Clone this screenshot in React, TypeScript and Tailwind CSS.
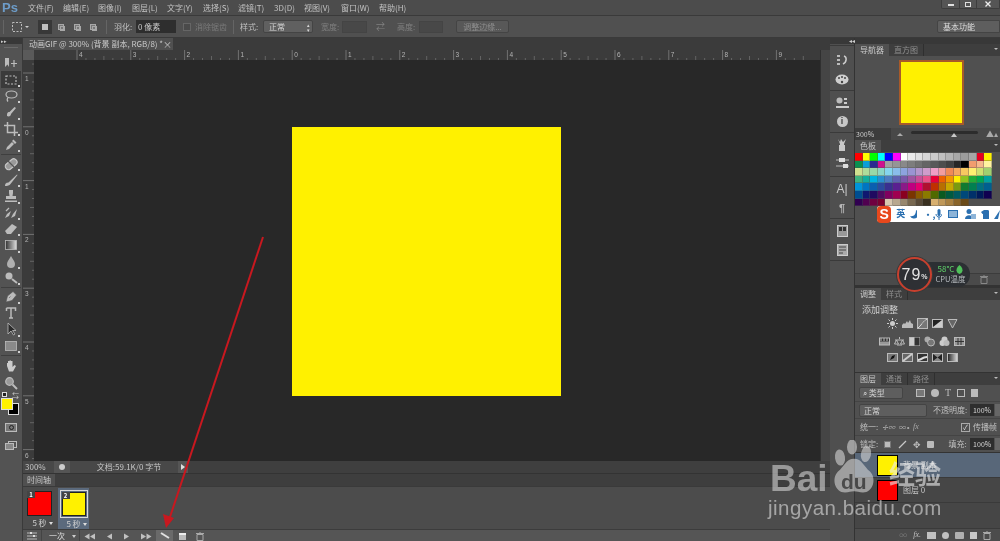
import React from "react";

const FONT = "font-['Noto_Sans_CJK_SC','Liberation_Sans',sans-serif]";

const I = ({ s = 14, children, className = "" }: { s?: number; children: React.ReactNode; className?: string }) => (
  <svg width={s} height={s} viewBox="0 0 14 14" fill="none" stroke="#bcbcbc" strokeWidth="1.2" className={"shrink-0 " + className}>
    {children}
  </svg>
);

const toolIcons: (React.ReactNode | null)[] = [
  <><path d="M2 2v9l2.5-2.5L6 11V2z" fill="#bcbcbc" stroke="none" transform="translate(-1 0)" /><path d="M10 4v7M7 7.5h6" /></>,
  <rect x="2" y="3" width="10" height="8" strokeDasharray="2 1.5" />,
  <><ellipse cx="7.5" cy="5.5" rx="5.5" ry="3.5" /><path d="M4 8.5c-1 1.5-1 3 0 4" /></>,
  <><path d="M3 11c2 1 4 0 4-2l5-6-1.5-1-5 5C3 7 3 9 3 11z" fill="#bcbcbc" stroke="none" /></>,
  <><path d="M3.5 0v10.5H14M0 3.5h10.5V14" strokeWidth="1.5" /></>,
  <><path d="M2 12l1-3 5-5 2 2-5 5zM8 3l1.5-1.5 3 3L11 6z" fill="#bcbcbc" stroke="none" /></>,
  <><rect x="0.5" y="4" width="13" height="6.5" rx="3" transform="rotate(-40 7 7)" fill="#9a9a9a" stroke="#c8c8c8" /><path d="M4 4l6 6" stroke="#555" /></>,
  <path d="M1 13c0-3 2-3.5 3.5-3.5L13 1.5 13.5 2l-7 9c-1 1.5-3 2-5.500 2z" fill="#bcbcbc" stroke="none" />,
  <><path d="M5 1h4v3L8.500 7H12v3H2V7h3.500L5 4zM1 11.500h12V13H1z" fill="#bcbcbc" stroke="none" /></>,
  <><path d="M1 12l2-4 4-3-2 5zM7 12l2-4 4-5-2 7z" fill="#bcbcbc" stroke="none" /><path d="M2 5l3-3" /></>,
  <path d="M1 9l7-7 5 3-6 7H3z" fill="#bcbcbc" stroke="none" />,
  <><defs><linearGradient id="gr"><stop offset="0" stopColor="#333" /><stop offset="1" stopColor="#ddd" /></linearGradient></defs><rect x="1.500" y="2.500" width="11" height="9" fill="url(#gr)" stroke="#bcbcbc" strokeWidth=".8" /></>,
  <path d="M7 1c2 3.500 4 5.500 4 8a4 4 0 0 1-8 0c0-2.500 2-4.500 4-8z" fill="#b0b0b0" stroke="none" />,
  <><circle cx="5" cy="5" r="3.500" fill="#bcbcbc" stroke="none" /><path d="M8 8l5 4" strokeWidth="2" /></>,
  <path d="M2 12l1.500-6L9 1.500l3.500 3.500L8 10.500zM5 8l1.500-1.500" fill="#bcbcbc" stroke="#555" strokeWidth=".6" />,
  <path d="M2.500 2h9v3M7 2v10M5 12h4M2.500 5V2" strokeWidth="1.500" />,
  <path d="M4 1v11l3-3 2.500 4 1.500-1-2.500-3.500H12z" fill="#2c2c2c" stroke="#bcbcbc" strokeWidth=".8" />,
  <rect x="1.500" y="2.500" width="11" height="9" fill="#8a8a8a" stroke="#bcbcbc" strokeWidth=".8" />,
  <path d="M3 7V4h1v3-5h1.500v5V1.500H7V7V2h1.500v6L10.500 6l1.500 1-3 5.500H5z" fill="#cccccc" stroke="none" />,
  <><circle cx="5.500" cy="5.500" r="3.800" fill="#9a9a9a" /><path d="M8.500 8.500l4.500 4.500" strokeWidth="2" /></>,
];

const Corner = () => <span className="absolute right-[1px] bottom-[1px] w-[2px] h-[2px] bg-[#cfcfcf]" />;

const Tool = ({ i, active = false }: { i: number; active?: boolean }) => (
  <div className={"relative w-[20px] h-[16.4px] flex items-center justify-center " + (active ? "bg-[#3a3a3a]" : "")}>
    <I>{toolIcons[i]}</I>
    {i !== 0 && i !== 15 && i !== 18 && i !== 19 ? <Corner /> : null}
  </div>
);

const Sep = () => <div className="w-[20px] h-[1px] bg-[#3f3f3f] my-[0.5px]" />;

const HRuler = () => {
  const ticks: React.ReactNode[] = [];
  const labels = ["4", "3", "2", "1", "0", "1", "2", "3", "4", "5", "6", "7", "8", "9"];
  const x0 = 43;
  for (let n = 0; n < 15; n++) {
    const x = x0 + 53.8 * n;
    ticks.push(<line key={"m" + n} x1={x} x2={x} y1={0} y2={10} stroke="#8a8a8a" strokeWidth=".7" />);
    for (let k = 1; k < 6; k++) {
      const xx = x + (53.8 / 6) * k;
      ticks.push(<line key={"t" + n + k} x1={xx} x2={xx} y1={k === 3 ? 6 : 8} y2={10} stroke="#808080" strokeWidth=".6" />);
    }
    if (labels[n]) ticks.push(<text key={"l" + n} x={x + 2} y={7} fontSize="6.500" fill="#b5b5b5" fontFamily="Liberation Sans">{labels[n]}</text>);
  }
  return (
    <svg width="774" height="10" className="block">
      {ticks}
    </svg>
  );
};

const VRuler = () => {
  const ticks: React.ReactNode[] = [];
  const labels = ["1", "0", "1", "2", "3", "4", "5", "6"];
  const y0 = 13;
  for (let n = -1; n < 8; n++) {
    const y = y0 + 53.8 * n;
    ticks.push(<line key={"m" + n} y1={y} y2={y} x1={0} x2={11} stroke="#8a8a8a" strokeWidth=".7" />);
    for (let k = 1; k < 6; k++) {
      const yy = y + (53.8 / 6) * k;
      ticks.push(<line key={"t" + n + k} y1={yy} y2={yy} x1={k === 3 ? 7 : 9} x2={11} stroke="#808080" strokeWidth=".6" />);
    }
    if (n >= 0 && labels[n]) ticks.push(<text key={"l" + n} x={2} y={y + 8} fontSize="6.500" fill="#b5b5b5" fontFamily="Liberation Sans">{labels[n]}</text>);
  }
  return (
    <svg width="11" height="401" className="block shrink-0 bg-[#3b3b3b]">
      {ticks}
    </svg>
  );
};

const menu = ["文件(F)", "编辑(E)", "图像(I)", "图层(L)", "文字(Y)", "选择(S)", "滤镜(T)", "3D(D)", "视图(V)", "窗口(W)", "帮助(H)"];
const menuW = [35, 35, 34, 35, 36, 35, 36, 30, 37, 38, 30];

const Tab = ({ t, on = false }: { t: string; on?: boolean }) => (
  <div className={"h-full px-[5px] flex items-center text-[8px] " + (on ? "bg-[#505050] text-[#c8c8c8]" : "text-[#8f8f8f] border-r border-[#2f2f2f]")}>{t}</div>
);

const PanelHead = ({ tabs }: { tabs: string[] }) => (
  <div className="h-[12px] shrink-0 bg-[#3e3e3e] flex items-stretch relative">
    {tabs.map((t, i) => (
      <Tab key={t} t={t} on={i === 0} />
    ))}
    <span className="absolute right-[2px] top-[4px] w-0 h-0 border-x-[2px] border-x-transparent border-t-[2px] border-t-[#bbbbbb]" />
  </div>
);

const swatches: string[][] = [
  ["#ff0000", "#ffff00", "#00ff00", "#00ffff", "#0000ff", "#ff00ff", "#ffffff", "#ebebeb", "#e1e1e1", "#d7d7d7", "#cbcbcb", "#c0c0c0", "#b4b4b4", "#a8a8a8", "#9c9c9c", "#a6a6a6", "#e60020", "#fff100"],
  ["#0a9050", "#0a9fd8", "#2a2a90", "#d01090", "#a0a0a0", "#959595", "#898989", "#7d7d7d", "#717171", "#656565", "#595959", "#4d4d4d", "#404040", "#262626", "#000000", "#f19d6f", "#f6b98c", "#fff3a0"],
  ["#cfe08f", "#aedc9a", "#98d8a8", "#8cd7c6", "#85d5ee", "#89bdea", "#8da4de", "#9a93d2", "#b696cc", "#cf9ccb", "#ef9fc7", "#f29da0", "#f08a58", "#f5a860", "#f8c860", "#fff070", "#cfe070", "#a0d070"],
  ["#3fb37f", "#14ae9c", "#00b4e0", "#2a8fd0", "#4f7cc0", "#5f62b0", "#7a58a8", "#9f54a0", "#c84f98", "#e9528a", "#e6003a", "#ec6100", "#f39800", "#fff100", "#8fc31f", "#22ac38", "#00a752", "#00a0a0"],
  ["#0095d9", "#0075c2", "#0a5fb0", "#2a4aa0", "#3a2f90", "#5a2090", "#8a1a88", "#c00080", "#e4006f", "#b01030", "#c03000", "#b87000", "#c8a800", "#7a9a10", "#107a30", "#008050", "#007080", "#005f90"],
  ["#004d90", "#101870", "#200a60", "#500a60", "#80005f", "#a00050", "#8a0020", "#7a3500", "#8a5a00", "#8a7a00", "#506a00", "#0a5a20", "#005a40", "#005a60", "#00487a", "#00306a", "#001a5a", "#100050"],
  ["#300050", "#500050", "#700040", "#7a0030", "#d8c8b0", "#b8a890", "#98886f", "#786850", "#584a38", "#3a3020", "#d8b070", "#c09858", "#a88040", "#8a6428", "#6a4a18"],
];

const Adj = ({ k }: { k: number }) => (
  <svg width="11" height="11" viewBox="0 0 11 11" className="shrink-0">
    {k === 0 ? (
      <><circle cx="5.500" cy="5.500" r="2.500" fill="#ccc" /><path d="M5.500 0v2M5.500 9v2M0 5.500h2M9 5.500h2M1.500 1.500l1.500 1.500M8 8l1.500 1.500M1.500 9.500L3 8M8 3l1.500-1.500" stroke="#ccc" /></>
    ) : k === 1 ? (
      <path d="M0 10V7l2-2 1 1 2-3 1 2 2-3 1 3 2 1v4z" fill="#bbb" />
    ) : k === 2 ? (
      <><rect x=".5" y=".5" width="10" height="10" fill="#777" stroke="#bbb" /><path d="M1 10C4 8 6 3 10 1" stroke="#ddd" /></>
    ) : k === 3 ? (
      <><rect x=".5" y="1.500" width="10" height="8" fill="#222" stroke="#bbb" /><path d="M1 9L10 2v7z" fill="#ccc" /></>
    ) : k === 4 ? (
      <path d="M1 1.500h9L5.500 10z" fill="#666" stroke="#bbb" />
    ) : k === 5 ? (
      <><rect x=".5" y="2" width="10" height="7" fill="#999" stroke="#bbb" /><path d="M1 2.500h9v3H1z" fill="#333" /><path d="M2 2v3M5 2v3M8 2v3" stroke="#bbb" /></>
    ) : k === 6 ? (
      <path d="M5.500 1v2M1 4h9M2.500 4L.5 8h4zM8.500 4l-2 4h4zM3 9h5" stroke="#bbb" fill="none" />
    ) : k === 7 ? (
      <><rect x=".5" y="1.500" width="10" height="8" fill="#ccc" stroke="#bbb" /><rect x="5.500" y="1.500" width="5" height="8" fill="#333" /></>
    ) : k === 8 ? (
      <><circle cx="3.500" cy="3.500" r="3" fill="#aaa" /><circle cx="7" cy="6.500" r="3.500" fill="#777" stroke="#bbb" /></>
    ) : k === 9 ? (
      <><circle cx="5.500" cy="3.500" r="3" fill="#ccc" /><circle cx="3.500" cy="7" r="3" fill="#ccc" /><circle cx="7.500" cy="7" r="3" fill="#bbb" /></>
    ) : k === 10 ? (
      <><rect x=".5" y="1.500" width="10" height="8" fill="#999" stroke="#bbb" /><path d="M4 2v7M7 2v7M1 5.500h9" stroke="#333" /></>
    ) : k === 11 ? (
      <><rect x=".5" y="1.500" width="10" height="8" fill="#777" stroke="#bbb" /><path d="M3 8l2-4 3-1-1 3z" fill="#111" /></>
    ) : k === 12 ? (
      <><rect x=".5" y="1.500" width="10" height="8" fill="#666" stroke="#bbb" /><path d="M1 9l9-7" stroke="#ccc" strokeWidth="2" /></>
    ) : k === 13 ? (
      <><rect x=".5" y="1.500" width="10" height="8" fill="#333" stroke="#bbb" /><path d="M1 7c3 0 4-3 9-3v2c-4 0-5 3-9 3z" fill="#ddd" /></>
    ) : k === 14 ? (
      <><rect x=".5" y="1.500" width="10" height="8" fill="#888" stroke="#bbb" /><path d="M1 2l4.500 3.500L1 9zM10 2L5.500 5.500 10 9z" fill="#222" /></>
    ) : (
      <><defs><linearGradient id="ad"><stop offset="0" stopColor="#222" /><stop offset="1" stopColor="#ddd" /></linearGradient></defs><rect x=".5" y="1.500" width="10" height="8" fill="url(#ad)" stroke="#bbb" /></>
    )}
  </svg>
);

const DockSep = () => <div className="w-[24px] h-[2px] border-b border-[#3a3a3a] mb-[2px]" />;
const DockBtn = ({ children }: { children: React.ReactNode }) => (
  <div className="w-[24px] h-[19px] flex items-center justify-center">{children}</div>
);

const Arrow = ({ flip = false, double = false }: { flip?: boolean; double?: boolean }) => (
  <svg width={double ? 11 : 7} height="7" viewBox={double ? "0 0 11 7" : "0 0 7 7"} className={flip ? "-scale-x-100" : ""}>
    <path d="M0 .5l5 3-5 3z" fill="#c0c0c0" />
    {double ? <path d="M5.500 .5l5 3-5 3z" fill="#c0c0c0" /> : null}
  </svg>
);

const Frame = ({ n, color, sel = false }: { n: number; color: string; sel?: boolean }) => (
  <div className={"flex flex-col items-center w-[31px] h-[41px] " + (sel ? "bg-[#5b6a7d]" : "")}>
    <div className={"relative mt-[2px] " + (sel ? "w-[28px] h-[28px] border border-[#dcdcdc] p-[1px]" : "w-[27px] h-[27px] p-[1px]")}>
      <div className="w-full h-full border border-[#222]" style={{ background: color }} />
      <span className="absolute left-[1px] top-[1px] w-[8px] h-[7px] bg-[#444] text-white text-[6px] leading-[7px] text-center font-bold">{n}</span>
    </div>
    <div className="flex items-center gap-[2px] text-[8px] leading-[10px] text-[#d0d0d0] mt-[1px] ml-[6px]">
      5 秒<span className="w-0 h-0 border-x-[2px] border-x-transparent border-t-[3px] border-t-[#ddd]" />
    </div>
  </div>
);

export default function App() {
  return (
    <div className={"relative w-[1000px] h-[541px] overflow-hidden bg-[#505050] flex flex-col text-[#c0c0c0] blur-[0.3px] " + FONT}>
      {/* menu bar */}
      <div className="h-[16px] shrink-0 flex items-center bg-[#4c4c4c] border-b border-[#3a3a3a]">
        <div className="w-[28px] pl-[2px] text-[13px] leading-[14px] font-bold text-[#6d9cc8] font-['Liberation_Sans',sans-serif]">Ps</div>
        {menu.map((m, i) => (
          <div key={m} className="text-[8px] leading-[14px] text-[#c2c2c2] whitespace-nowrap" style={{ width: menuW[i] }}>
            {m}
          </div>
        ))}
        <div className="ml-auto self-start h-[9px] w-[59px] flex bg-[#555555] border border-t-0 border-[#3d3d3d] rounded-b-[2px]">
          <div className="w-[18px] flex items-center justify-center border-r border-[#3d3d3d]"><span className="w-[6px] h-[1.500px] bg-[#e0e0e0] mt-[2px]" /></div>
          <div className="w-[17px] flex items-center justify-center border-r border-[#3d3d3d]"><span className="w-[6px] h-[5px] border border-[#e0e0e0]" /></div>
          <div className="flex-1 flex items-center justify-center">
            <svg width="6" height="6"><path d="M.5 .5l5 5M5.500 .5l-5 5" stroke="#eeeeee" strokeWidth="1.300" /></svg>
          </div>
        </div>
      </div>
      {/* options bar */}
      <div className="h-[22px] shrink-0 flex items-center bg-[#505050] border-b border-[#3a3a3a] text-[8px] whitespace-nowrap">
        <div className="w-[3px] h-[14px] ml-[3px] border-l border-[#656565]" />
        <svg width="10" height="10" className="ml-[6px]"><rect x=".5" y=".5" width="9" height="9" fill="none" stroke="#bdbdbd" strokeDasharray="2 1.500" /></svg>
        <span className="ml-[3px] w-0 h-0 border-x-[2px] border-x-transparent border-t-[2px] border-t-[#cccccc]" />
        <div className="ml-[9px] w-[14px] h-[14px] bg-[#383838] flex items-center justify-center"><span className="w-[6px] h-[6px] bg-[#bdbdbd]" /></div>
        {[0, 1, 2].map((k) => (
          <div key={k} className="relative ml-[2px] w-[14px] h-[14px] flex items-center justify-center">
            <span className="w-[6px] h-[6px] border border-[#a8a8a8] bg-[#777]" />
            <span className="absolute left-[6px] top-[6px] w-[5px] h-[5px] border border-[#a8a8a8]" />
          </div>
        ))}
        <div className="ml-[6px] h-[14px] border-l border-[#656565]" />
        <span className="ml-[7px] w-[22px]">羽化:</span>
        <div className="w-[40px] h-[13px] bg-[#2e2e2e] pl-[2px] leading-[13px] text-[#c8c8c8]">0 像素</div>
        <span className="ml-[7px] w-[8px] h-[8px] border border-[#666] bg-[#4a4a4a]" />
        <span className="ml-[4px] w-[30px] text-[#7a7a7a]">消除锯齿</span>
        <div className="ml-[8px] h-[14px] border-l border-[#656565]" />
        <span className="ml-[6px] w-[23px]">样式:</span>
        <div className="w-[50px] h-[13px] bg-[#606060] border border-[#444] rounded-[2px] pl-[5px] leading-[11px] flex items-center text-[#d8d8d8]">
          正常<span className="ml-auto mr-[2px] text-[5px] leading-[5px] text-center">▴<br />▾</span>
        </div>
        <span className="ml-[8px] w-[21px] text-[#808080]">宽度:</span>
        <div className="w-[25px] h-[12px] bg-[#484848] border border-[#444]" />
        <span className="ml-[9px] w-[12px] text-[#808080] text-[9px]">⇄</span>
        <span className="ml-[9px] w-[22px] text-[#808080]">高度:</span>
        <div className="w-[24px] h-[12px] bg-[#484848] border border-[#444]" />
        <div className="ml-[13px] w-[53px] h-[13px] bg-[#585858] border border-[#444] rounded-[2px] text-center leading-[11px] text-[#8e8e8e]">调整边缘...</div>
        <div className="ml-auto w-[63px] h-[13px] bg-[#5e5e5e] border border-[#444] rounded-l-[2px] pl-[5px] leading-[11px] text-[#dddddd] text-[8px]">基本功能</div>
      </div>
      {/* main */}
      <div className="flex-1 flex min-h-0">
        {/* toolbar */}
        <div className="w-[23px] shrink-0 flex flex-col items-center bg-[#535353] border-r border-[#3a3a3a]">
          <div className="w-full h-[6px] bg-[#383838] text-[5px] leading-[6px] pl-[1px] text-[#ccc]">▸▸</div>
          <div className="w-[14px] h-[2px] border-b border-[#6a6a6a] my-[2px]" />
          <div className="h-[5px]" />
          <Tool i={0} />
          <Tool i={1} active />
          <Tool i={2} />
          <Tool i={3} />
          <Tool i={4} />
          <Tool i={5} />
          <Sep />
          <Tool i={6} />
          <Tool i={7} />
          <Tool i={8} />
          <Tool i={9} />
          <Tool i={10} />
          <Tool i={11} />
          <Tool i={12} />
          <Tool i={13} />
          <Sep />
          <Tool i={14} />
          <Tool i={15} />
          <Tool i={16} />
          <Tool i={17} />
          <Sep />
          <div className="h-[2px]" />
          <Tool i={18} />
          <Tool i={19} />
          <div className="relative w-[20px] h-[30px] mt-[1px]">
            <span className="absolute left-[1px] top-0 w-[5px] h-[5px] bg-[#222] border border-[#ddd]" />
            <span className="absolute right-[2px] top-0 text-[7px] leading-[7px] text-[#ccc]">⇆</span>
            <span className="absolute left-[7px] top-[11px] w-[11px] h-[12px] bg-black border border-[#ddd]" />
            <span className="absolute left-0 top-[6px] w-[12px] h-[12px] bg-[#fff100] border border-[#ddd]" />
          </div>
          <div className="mt-[1px] w-[12px] h-[9px] border border-[#bbb] bg-[#777] flex items-center justify-center"><span className="w-[5px] h-[5px] rounded-full border border-[#222]" /></div>
          <div className="mt-[9px] relative w-[12px] h-[10px]">
            <span className="absolute left-[3px] top-0 w-[9px] h-[7px] border border-[#bbb]" />
            <span className="absolute left-0 top-[2px] w-[9px] h-[7px] border border-[#bbb] bg-[#888]" />
          </div>
        </div>
        {/* centre */}
        <div className="w-[807px] shrink-0 flex flex-col">
          <div className="h-[12px] shrink-0 bg-[#3b3b3b] flex">
            <div className="w-[150px] h-full bg-[#505050] flex items-center pl-[6px] text-[8px] text-[#c8c8c8] whitespace-nowrap">
              动画GIF @ 300% (背景 副本, RGB/8) *<span className="ml-auto mr-[2px] text-[9px] leading-[9px]">×</span>
            </div>
          </div>
          <div className="flex-1 flex flex-col min-h-0">
            <div className="flex flex-1 min-h-0">
              <div className="flex-1 flex flex-col min-w-0">
                <div className="h-[10px] flex shrink-0 bg-[#3b3b3b]">
                  <div className="w-[11px] bg-[#5a5a5a]" />
                  <HRuler />
                </div>
                <div className="flex-1 flex min-h-0">
                  <VRuler />
                  <div className="flex-1 bg-[#282828] pl-[258px] pt-[67px]">
                    <div className="w-[269px] h-[269px] bg-[#fff100]" />
                  </div>
                </div>
              </div>
              <div className="w-[10px] shrink-0 bg-[#454545] border-l border-[#303030]" />
            </div>
            {/* status */}
            <div className="h-[12px] shrink-0 flex items-center bg-[#3f3f3f] text-[8px] text-[#c4c4c4]">
              <div className="w-[31px] h-full pl-[2px] leading-[12px] bg-[#484848]">300%</div>
              <div className="w-[16px] h-full bg-[#555] flex items-center justify-center"><span className="w-[6px] h-[6px] rounded-full bg-[#cccccc]" /></div>
              <div className="w-[108px] h-full bg-[#484848] text-center leading-[12px] pl-[10px]">文档:59.1K/0 字节</div>
              <div className="w-[10px] h-full bg-[#555] flex items-center justify-center"><span className="w-0 h-0 border-y-[3px] border-y-transparent border-l-[4px] border-l-[#ddd]" /></div>
            </div>
            {/* timeline */}
            <div className="h-[68px] shrink-0 flex flex-col bg-[#4c4c4c] border-t border-[#333]">
              <div className="h-[12px] shrink-0 bg-[#3e3e3e] flex"><div className="w-[32px] bg-[#505050] text-[8px] leading-[12px] text-center text-[#c8c8c8]">时间轴</div></div>
              <div className="flex-1 flex items-start pl-[1px] pt-[1px] gap-[3px] border-t border-[#3a3a3a]">
                <Frame n={1} color="#ff0000" />
                <Frame n={2} color="#fff100" sel />
              </div>
              <div className="h-[13px] shrink-0 flex items-center bg-[#555555] border-t border-[#3c3c3c] relative">
                <div className="w-[19px] h-full flex items-center justify-center border-r border-[#444]">
                  <svg width="10" height="8"><path d="M0 1h10M0 4h10M0 7h10" stroke="#bbb" /><rect x="3" y="0" width="2" height="2" fill="#ddd" /><rect x="6" y="3" width="2" height="2" fill="#ddd" /></svg>
                </div>
                <div className="w-[38px] h-full flex items-center pl-[7px] text-[8px] text-[#dddddd] border-r border-[#444]">一次<span className="ml-auto mr-[3px] w-0 h-0 border-x-[2px] border-x-transparent border-t-[3px] border-t-[#ccc]" /></div>
                <div className="w-[19px] flex justify-center"><Arrow flip double /></div>
                <div className="w-[19px] flex justify-center"><Arrow flip /></div>
                <div className="w-[19px] flex justify-center"><Arrow /></div>
                <div className="w-[19px] flex justify-center"><Arrow double /></div>
                <div className="w-[17px] h-full bg-[#6a6a6a] flex items-center justify-center">
                  <svg width="10" height="8"><path d="M1 1l8 5" stroke="#e0e0e0" strokeWidth="2" /></svg>
                </div>
                <div className="w-[18px] flex justify-center"><span className="w-[7px] h-[7px] bg-[#bbb] border-t-2 border-[#eee]" /></div>
                <div className="w-[18px] flex justify-center">
                  <svg width="8" height="9"><path d="M0 1.500h8M1 2.500h6v6H1zM3 0h2" stroke="#aaa" fill="none" /></svg>
                </div>
              </div>
            </div>
          </div>
        </div>
        {/* dock */}
        <div className="w-[25px] shrink-0 flex flex-col items-center bg-[#4f4f4f] border-r border-[#333]">
          <div className="h-[6px] w-full bg-[#383838]" />
          <DockSep />
          <div className="h-[3px]" />
          <DockBtn><svg width="12" height="13"><path d="M1 1h3v2H1zM1 5h3v2H1zM1 9h3v2H1z" fill="#bbb" /><path d="M8 2c3 1 3 6-1 8" stroke="#ccc" fill="none" strokeWidth="1.500" /></svg></DockBtn>
          <DockBtn><svg width="14" height="11"><ellipse cx="7" cy="5.500" rx="6.500" ry="5" fill="#cfcfcf" /><circle cx="4" cy="4" r="1" fill="#444" /><circle cx="7" cy="3" r="1" fill="#444" /><circle cx="10" cy="4" r="1" fill="#444" /><circle cx="7" cy="8" r="1.200" fill="#444" /></svg></DockBtn>
          <DockSep />
          <DockBtn><svg width="13" height="12"><circle cx="3.500" cy="3.500" r="3" fill="#bbb" /><path d="M8 1h3v2H8zM8 5h3v2H8zM0 9h13v2H0z" fill="#ccc" /></svg></DockBtn>
          <DockBtn><span className="w-[11px] h-[11px] rounded-full bg-[#c8c8c8] text-[#444] text-[9px] leading-[11px] font-bold text-center font-['Liberation_Sans',sans-serif]">i</span></DockBtn>
          <DockSep />
          <DockBtn><svg width="10" height="14"><path d="M1 1l2 3 1-3 2 3 3-3-2 5v1h1v6H2V7h1V6z" fill="#c8c8c8" /></svg></DockBtn>
          <DockBtn><svg width="13" height="11"><path d="M0 2h13M0 8h13" stroke="#bbb" /><path d="M3 0h6v4H3zM7 6h5v4H7z" fill="#ddd" /></svg></DockBtn>
          <div className="h-[2px]" />
          <DockSep />
          <DockBtn><span className="text-[12px] leading-[14px] text-[#c8c8c8] font-['Liberation_Sans',sans-serif]">A|</span></DockBtn>
          <DockBtn><span className="text-[11px] leading-[14px] font-bold text-[#b8b8b8] font-['Liberation_Sans',sans-serif]">¶</span></DockBtn>
          <DockSep />
          <DockBtn><svg width="11" height="12"><rect x=".5" y=".5" width="10" height="11" fill="#999" stroke="#ccc" /><path d="M2 2h3v4H2zM6 2h3v4H6z" fill="#333" /></svg></DockBtn>
          <DockBtn><svg width="11" height="12"><rect x=".5" y=".5" width="10" height="11" fill="#aaa" stroke="#ccc" /><path d="M2 3h7M2 6h7M2 9h4" stroke="#444" /></svg></DockBtn>
          <DockSep />
        </div>
        {/* panels */}
        <div className="flex-1 min-w-0 flex flex-col text-[8px]">
          <div className="h-[6px] shrink-0 bg-[#383838] relative"><span className="absolute -left-[6px] top-0 text-[6px] leading-[6px] text-[#ccc]">◂◂</span></div>
          <PanelHead tabs={["导航器", "直方图"]} />
          <div className="h-[72px] shrink-0 flex items-center justify-center bg-[#505050] pl-[8px]">
            <div className="w-[65px] h-[65px] bg-[#fff100] border-2 border-[#a75a2a]" />
          </div>
          <div className="h-[12px] shrink-0 flex items-center bg-[#484848]">
            <span className="w-[36px] h-full pl-[1px] leading-[12px] bg-[#3c3c3c] text-[7px] text-[#cccccc]">300%</span>
            <span className="ml-[6px] w-0 h-0 border-x-[3px] border-x-transparent border-b-[3px] border-b-[#aaaaaa]" />
            <div className="relative ml-[8px] w-[67px] h-[3px] bg-[#2c2c2c] rounded-full -mt-[3px]"><span className="absolute left-[40px] top-[2px] w-0 h-0 border-x-[3px] border-x-transparent border-b-[4px] border-b-[#c8c8c8]" /></div>
            <span className="ml-[8px] text-[8px] leading-[8px] text-[#aaaaaa]">▲▴</span>
          </div>
          <PanelHead tabs={["色板"]} />
          <div className="h-[133px] shrink-0 bg-[#505050] flex flex-col pt-[1px] relative">
            {swatches.map((row, y) => (
              <div key={y} className="flex h-[7.600px]">
                {row.map((c, x) => (
                  <div key={x} className="w-[7.600px] h-full border-r border-b border-[#50505060]" style={{ backgroundColor: c }} />
                ))}
              </div>
            ))}
            <div className="absolute bottom-0 left-0 right-0 h-[12px] bg-[#4a4a4a] border-t border-[#3c3c3c] flex items-center justify-end pr-[12px]">
              <svg width="8" height="9"><path d="M0 1.500h8M1 2.500h6v6H1zM3 0h2" stroke="#888" fill="none" /></svg>
            </div>
          </div>
          <div className="h-[3px] shrink-0 bg-[#333]" />
          <PanelHead tabs={["调整", "样式"]} />
          <div className="h-[72px] shrink-0 bg-[#505050] relative">
            <div className="pl-[7px] pt-[4px] text-[9px] leading-[12px] text-[#d0d0d0]">添加调整</div>
            <div className="flex justify-center gap-[4px] h-[14px] items-center pr-[11px]">
              {[0, 1, 2, 3, 4].map((k) => <Adj key={k} k={k} />)}
            </div>
            <div className="flex justify-center gap-[4px] mt-[4px] h-[14px] items-center pr-[11px]">
              {[5, 6, 7, 8, 9, 10].map((k) => <Adj key={k} k={k} />)}
            </div>
            <div className="flex justify-center gap-[4px] mt-[2px] h-[14px] items-center pr-[11px]">
              {[11, 12, 13, 14, 15].map((k) => <Adj key={k} k={k} />)}
            </div>
          </div>
          <div className="h-[1px] shrink-0 bg-[#333]" />
          <PanelHead tabs={["图层", "通道", "路径"]} />
          <div className="h-[16px] shrink-0 flex items-center pl-[4px] bg-[#505050]">
            <div className="w-[44px] h-[12px] bg-[#5e5e5e] border border-[#444] rounded-[2px] pl-[3px] leading-[10px] text-[#d0d0d0] whitespace-nowrap text-[8px]">⌕ 类型</div>
            <div className="ml-[13px] flex gap-[6px] items-center text-[#bbb]">
              <span className="w-[9px] h-[8px] border border-[#bbb] bg-[#777]" />
              <span className="w-[8px] h-[8px] rounded-full bg-[#bbb]" />
              <span className="text-[10px] leading-[10px] font-['Liberation_Serif',serif]">T</span>
              <span className="w-[8px] h-[8px] border border-[#bbb]" />
              <span className="w-[7px] h-[8px] bg-[#bbb]" />
            </div>
          </div>
          <div className="h-[17px] shrink-0 flex items-center pl-[4px] bg-[#505050] border-t border-[#444] whitespace-nowrap">
            <div className="w-[68px] h-[13px] bg-[#5e5e5e] border border-[#444] rounded-[2px] pl-[4px] leading-[11px] text-[#d8d8d8]">正常</div>
            <span className="ml-[6px] w-[37px]">不透明度:</span>
            <div className="w-[24px] h-[12px] bg-[#2e2e2e] text-center leading-[12px] text-[#d8d8d8] text-[7px]">100%</div>
            <div className="ml-[1px] w-[5px] h-[12px] bg-[#666]" />
          </div>
          <div className="h-[17px] shrink-0 flex items-center pl-[5px] bg-[#505050] border-t border-[#444] whitespace-nowrap">
            <span className="w-[22px]">统一:</span>
            <span className="w-[17px] text-[7px] text-[#aaa] italic">✢∞</span>
            <span className="w-[14px] text-[7px] text-[#aaa]">∞∘</span>
            <span className="w-[48px] text-[8px] text-[#aaa] italic font-['Liberation_Serif',serif]">fx</span>
            <span className="w-[9px] h-[9px] border border-[#aaa] text-[7px] leading-[7px] text-center text-[#ddd]">✓</span>
            <span className="ml-[3px]">传播帧</span>
          </div>
          <div className="h-[17px] shrink-0 flex items-center pl-[5px] bg-[#505050] border-t border-[#444] whitespace-nowrap">
            <span className="w-[24px]">锁定:</span>
            <span className="w-[7px] h-[7px] bg-[#bbb] border border-[#777]" />
            <svg width="9" height="9" className="ml-[7px]"><path d="M1 8l7-7" stroke="#c8c8c8" strokeWidth="1.300" /></svg>
            <span className="ml-[6px] text-[9px] leading-[9px] text-[#c0c0c0]">✥</span>
            <span className="ml-[6px] w-[7px] h-[7px] bg-[#bbb] rounded-[1px]" />
            <span className="ml-[15px] w-[22px]">填充:</span>
            <div className="w-[24px] h-[12px] bg-[#2e2e2e] text-center leading-[12px] text-[#d8d8d8] text-[7px]">100%</div>
            <div className="ml-[1px] w-[5px] h-[12px] bg-[#666]" />
          </div>
          <div className="flex-1 flex flex-col min-h-0 bg-[#464646] border-t border-[#333]">
            <div className="h-[25px] shrink-0 flex items-center bg-[#586779] border-b border-[#3a3a3a] pl-[22px]">
              <span className="w-[21px] h-[21px] bg-[#fff100] border border-black" />
              <span className="ml-[5px] text-[#d8d8d8]">背景 副本</span>
            </div>
            <div className="h-[25px] shrink-0 flex items-center border-b border-[#3a3a3a] pl-[22px]">
              <span className="w-[21px] h-[21px] bg-[#ff0000] border border-black" />
              <span className="ml-[5px] text-[#c4c4c4]">图层 0</span>
            </div>
          </div>
          <div className="h-[13px] shrink-0 bg-[#4c4c4c] border-t border-[#3a3a3a] flex items-center justify-end gap-[6px] pr-[9px]">
            <span className="text-[8px] leading-[8px] text-[#777]">∞</span>
            <span className="text-[8px] leading-[8px] italic text-[#c0c0c0] font-['Liberation_Serif',serif]">fx.</span>
            <span className="w-[9px] h-[7px] bg-[#c0c0c0]" />
            <span className="w-[7px] h-[7px] rounded-full bg-[#c0c0c0]" />
            <span className="w-[9px] h-[7px] bg-[#b0b0b0] rounded-[1px]" />
            <span className="w-[7px] h-[7px] bg-[#c8c8c8]" />
            <svg width="8" height="9"><path d="M0 1.500h8M1 2.500h6v6H1zM3 0h2" stroke="#aaa" fill="none" /></svg>
          </div>
        </div>
      </div>

      {/* red annotation arrow */}
      <svg className="absolute left-0 top-0 pointer-events-none" width="1000" height="541">
        <path d="M263 237L169 520" stroke="#c8181f" strokeWidth="2" />
        <path d="M166 528L163 514L174 518z" fill="#c8181f" />
      </svg>

      {/* sogou IME bar */}
      <div className="absolute left-[877px] top-[206px] w-[123px] h-[16px] bg-white rounded-l-[3px] flex items-center text-[#2a6fb0]">
        <div className="w-[17px] h-[17px] bg-[#e8481c] rounded-[4px] text-white text-[14px] leading-[16px] font-bold text-center font-['Liberation_Sans',sans-serif]">S</div>
        <span className="ml-[5px] text-[9px] leading-[12px] font-bold w-[16px]">英</span>
        <svg width="8" height="9" className="mr-[7px]"><path d="M6 0a4.500 4.500 0 1 1-6 6c4 1 6-2 6-6z" fill="#2a6fb0" /></svg>
        <span className="text-[9px] leading-[9px] font-bold w-[14px]">·,</span>
        <svg width="8" height="11" className="mr-[6px]"><rect x="2.500" y="0" width="3" height="7" rx="1.500" fill="#2a6fb0" /><path d="M1 5c0 4 6 4 6 0M4 8v3" stroke="#2a6fb0" fill="none" /></svg>
        <span className="w-[11px] h-[8px] bg-[#8db4d8] border border-[#2a6fb0] mr-[7px]" />
        <svg width="13" height="10" className="mr-[5px]"><circle cx="4" cy="2.500" r="2.500" fill="#2a6fb0" /><path d="M0 10c0-5 8-5 8 0z" fill="#2a6fb0" /><rect x="6" y="5" width="7" height="5" fill="#8db4d8" /></svg>
        <svg width="10" height="9" className="mr-[5px]"><path d="M0 2l3-2h4l3 2-1.500 2H8v5H2V4H1.500z" fill="#2a6fb0" /></svg>
        <svg width="7" height="9"><path d="M6 0L0 9h4z" fill="#2a6fb0" /></svg>
      </div>

      {/* CPU widget */}
      <div className="absolute left-[897px] top-[257px] w-[73px] h-[35px]">
        <div className="absolute left-[18px] top-[5px] w-[55px] h-[25px] bg-[#2c2f33] rounded-r-[12px] flex flex-col items-center pl-[16px] text-[7.500px] leading-[10px] pt-[2px]">
          <div className="flex items-center gap-[2px] text-[#5fd06a] text-[8px]">58°C<svg width="7" height="9"><path d="M3.500 0C7 3 8 7 3.500 9 -1 7 0 3 3.500 0z" fill="#4fc05a" /></svg></div>
          <div className="text-[#b8bcc0] whitespace-nowrap">CPU温度</div>
        </div>
        <div className="absolute left-0 top-0 w-[35px] h-[35px] rounded-full bg-[#2e3034] border-2 border-[#c8402e] flex items-center justify-center text-[#e4e4e4] text-[16px] leading-[16px] tracking-[1px] font-['Liberation_Sans',sans-serif] shadow-[0_0_0_1px_#3a3a3a]">
          79<span className="text-[7px] leading-[8px] mt-[5px] tracking-normal font-bold">%</span>
        </div>
      </div>

      {/* Baidu watermark */}
      <div className="absolute left-[768px] top-[452px] w-[200px] h-[66px] opacity-60 pointer-events-none font-['Liberation_Sans',sans-serif]">
        <div className="absolute left-[2px] top-[7px] text-[37px] leading-[40px] font-bold text-[#d4d4d4]">Bai</div>
        <svg width="48" height="56" viewBox="0 0 48 48" preserveAspectRatio="none" className="absolute left-[62px] top-[-12px]">
          <ellipse cx="10" cy="15" rx="5" ry="7" fill="#d4d4d4" transform="rotate(-10 10 15)" />
          <ellipse cx="22" cy="6" rx="5" ry="6.500" fill="#d4d4d4" />
          <ellipse cx="36" cy="12" rx="5" ry="7" fill="#d4d4d4" transform="rotate(15 36 12)" />
          <path d="M24 16c8 0 10 7 16 11 7 6 3 18-7 18-4 0-6-1-9-1s-5 1-9 1C5 45 1 33 8 27c6-4 8-11 16-11z" fill="#d4d4d4" />
        </svg>
        <div className="absolute left-[73px] top-[18px] text-[21px] leading-[24px] font-bold text-[#4a4a4a]">du</div>
        <div className="absolute left-[121px] top-[6px] text-[26px] leading-[30px] font-bold text-[#eeeeee] font-['Noto_Sans_CJK_SC',sans-serif] whitespace-nowrap">经验</div>
        <div className="absolute left-[0px] top-[44px] text-[20.500px] leading-[24px] text-[#e0e0e0] whitespace-nowrap tracking-[0.5px]">jingyan.baidu.com</div>
      </div>
    </div>
  );
}
